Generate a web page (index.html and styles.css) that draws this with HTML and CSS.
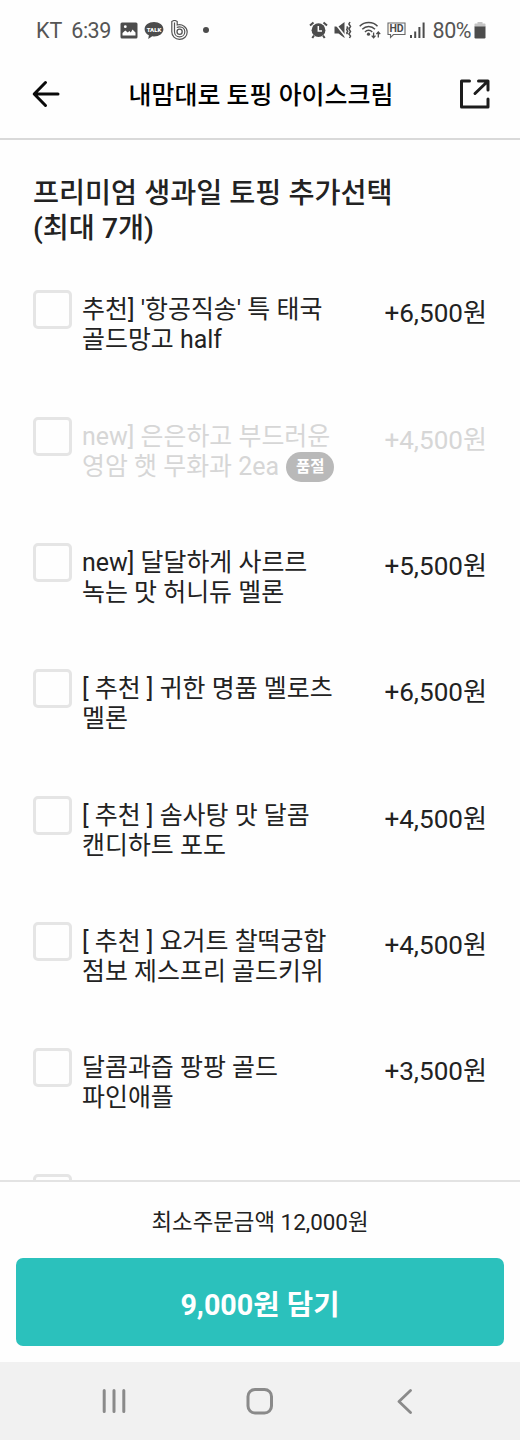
FILE: index.html
```
<!DOCTYPE html>
<html lang="ko">
<head>
    <meta charset="utf-8">
    <meta name="viewport" content="width=device-width, initial-scale=1">
    <title>내맘대로 토핑 아이스크림</title>
    <link rel="stylesheet" href="styles.css">
</head>
<body>
<div class="screen">
    <div class="status-bar">
        <div class="status-left">
            <span class="carrier">KT</span>
            <span class="time">6:39</span>
            <svg class="icon-picture" width="18" height="17" viewBox="0 0 18 17">
                <rect x="0.5" y="0.5" width="17" height="16" rx="1.5" fill="#4c4c4c"/>
                <path d="M2.500 13.500V11l2.800-2.500 2.500 2 1.500-1.500 1.500 1.500L12.500 7.500l3 3v3z" fill="#fff"/>
                <circle cx="5.300" cy="4.700" r="1.400" fill="#fff"/>
            </svg>
            <svg class="icon-talk" width="20" height="19" viewBox="0 0 20 19">
                <path d="M10 1C4.800 1 0.600 4.100 0.600 8.200c0 2.600 1.700 4.800 4.300 6.100L4.200 18l4-2.700 1.800.1c5.200 0 9.400-3.100 9.400-7.200S15.200 1 10 1z" fill="#4c4c4c"/>
                <text x="10" y="10.500" text-anchor="middle">TALK</text>
            </svg>
            <svg class="icon-band" width="17" height="20" viewBox="0 0 17 20" fill="none" stroke="#555">
                <path d="M0.800 1.500Q3.500-.5 6.200 1.500V5c5-1.200 10 2 10 7 0 4-3.200 7.400-7.700 7.400S0.800 16 0.800 11.800z" stroke-width="1.200"/>
                <path d="M3.500 2.500v9.300c0 2.900 2.200 5.100 5.100 5.100s5.200-2.200 5.200-5.100-2.300-5-5.200-5c-1 0-2 .2-2.800.8" stroke-width="1.200"/>
                <circle cx="8.600" cy="11.800" r="2.600" stroke-width="1.300"/>
            </svg>
            <span class="dot"></span>
        </div>
        <div class="status-right">
            <svg class="icon-alarm" width="19" height="18" viewBox="0 0 19 18">
                <circle cx="9.500" cy="9.200" r="6.900" fill="#4c4c4c"/>
                <path d="M1 4.500 4.500 1.500M18 4.500 14.500 1.500M5 14.500 3.300 17M14 14.500 15.700 17" stroke="#4c4c4c" stroke-width="2" fill="none"/>
                <path d="M9.300 5v5h3.700" stroke="#fff" stroke-width="1.500" fill="none"/>
            </svg>
            <svg class="icon-mute" width="18" height="18" viewBox="0 0 18 18">
                <path d="M0.500 5.500h4L10.500 1v16L4.500 12.500h-4z" fill="#4c4c4c"/>
                <path d="M0 1 11.500 15.500" stroke="#fff" stroke-width="1.600"/>
                <path d="M12.700 5.500l1 1.200-1 1.800 1 1.800-1 1.700.8 1.200M16 1l-1.100 2 1.600 2.500-1.600 2.500 1.600 2.500-1.600 2.500 1.600 2-1 2" fill="none" stroke="#4c4c4c" stroke-width="1.500"/>
            </svg>
            <svg class="icon-wifi" width="22" height="18" viewBox="0 0 22 18" fill="none" stroke="#4c4c4c">
                <path d="M0.700 5.200C5.500 0.300 14 0.300 18.500 5.200M3.300 8.200c3.600-3.700 9.200-3.700 12.700 0M6 11c2-2.200 5.200-2.200 7.200 0" stroke-width="1.500"/>
                <circle cx="9.500" cy="13.200" r="1.600" fill="#4c4c4c" stroke="none"/>
                <path d="M14.600 11.500v5M12.700 14.600l1.900 2.200 1.900-2.200M19.300 16.500v-5M17.400 13.200l1.900-2.200 1.900 2.200" stroke-width="1.300"/>
            </svg>
            <svg class="icon-hd" width="19" height="17" viewBox="0 0 19 17">
                <path d="M1 1h17v11.500H6.500L3.500 15.500V12.500H1z" fill="none" stroke="#666" stroke-width="1.100"/>
                <text x="9.500" y="10.400" text-anchor="middle">HD</text>
            </svg>
            <svg class="icon-signal" width="15" height="16" viewBox="0 0 15 16">
                <path d="M0 13h2v3H0zM4.200 9.500h2V16h-2zM8.400 5h2v11h-2zM12.600 0.500h2V16h-2z" fill="#4c4c4c"/>
            </svg>
            <span class="percent">80%</span>
            <svg class="icon-battery" width="12" height="18" viewBox="0 0 12 18">
                <path d="M3.500 1h5v1.500h2.300q.7 0 .7.700V6H.5V3.200q0-.7.700-.7h2.300z" fill="#c4c4c4"/>
                <path d="M.5 5.500h11v10.800q0 1.200-1.200 1.200H1.700q-1.200 0-1.200-1.200z" fill="#4c4c4c"/>
            </svg>
        </div>
    </div>

    <div class="header">
        <svg class="button-back" width="28" height="28" viewBox="0 0 28 28" fill="none" stroke="#0a0a0a" stroke-width="3" stroke-linecap="round" stroke-linejoin="round">
            <path d="M13.500 2.500 2.200 14l11.300 11.500M2.500 14h23.500"/>
        </svg>
        <h1 class="title">내맘대로 토핑 아이스크림</h1>
        <svg class="button-share" width="30" height="30" viewBox="0 0 30 30" fill="none" stroke="#1c1c1c" stroke-width="3" stroke-linejoin="round" stroke-linecap="round">
            <path d="M9.500 2H1.500v26H28V20M18.500 2H28v9M27.500 2.500 15 14.500"/>
        </svg>
    </div>

    <div class="content">
        <h2 class="group-title">프리미엄 생과일 토핑 추가선택<br>(최대 7개)</h2>

        <div class="option">
            <div class="checkbox"></div>
            <div class="option-name">추천] '항공직송' 특 태국<br>골드망고 half</div>
            <div class="option-price">+6,500원</div>
        </div>
        <div class="option sold-out">
            <div class="checkbox"></div>
            <div class="option-name">new] 은은하고 부드러운<br>영암 햇 무화과 2ea <span class="badge">품절</span></div>
            <div class="option-price">+4,500원</div>
        </div>
        <div class="option">
            <div class="checkbox"></div>
            <div class="option-name">new] 달달하게 사르르<br>녹는 맛 허니듀 멜론</div>
            <div class="option-price">+5,500원</div>
        </div>
        <div class="option">
            <div class="checkbox"></div>
            <div class="option-name">[ 추천 ] 귀한 명품 멜로츠<br>멜론</div>
            <div class="option-price">+6,500원</div>
        </div>
        <div class="option">
            <div class="checkbox"></div>
            <div class="option-name">[ 추천 ] 솜사탕 맛 달콤<br>캔디하트 포도</div>
            <div class="option-price">+4,500원</div>
        </div>
        <div class="option">
            <div class="checkbox"></div>
            <div class="option-name">[ 추천 ] 요거트 찰떡궁합<br>점보 제스프리 골드키위</div>
            <div class="option-price">+4,500원</div>
        </div>
        <div class="option">
            <div class="checkbox"></div>
            <div class="option-name">달콤과즙 팡팡 골드<br>파인애플</div>
            <div class="option-price">+3,500원</div>
        </div>
        <div class="option">
            <div class="checkbox"></div>
        </div>
    </div>

    <div class="footer">
        <div class="min-order">최소주문금액 12,000원</div>
        <button class="order-button">9,000원 담기</button>
    </div>

    <div class="nav-bar">
        <svg width="26" height="26" viewBox="0 0 26 26" fill="none" stroke="#8a8a8a" stroke-width="3" stroke-linecap="round">
            <path d="M3.200 2.500v21M13 2.500v21M22.800 2.500v21"/>
        </svg>
        <svg width="28" height="28" viewBox="0 0 28 28" fill="none" stroke="#8a8a8a" stroke-width="3">
            <rect x="2" y="2.500" width="23.500" height="23.500" rx="7"/>
        </svg>
        <svg width="26" height="26" viewBox="0 0 26 26" fill="none" stroke="#8a8a8a" stroke-width="2.800" stroke-linecap="round" stroke-linejoin="round">
            <path d="M18.500 2.500 7 13.500l11.500 11"/>
        </svg>
    </div>
</div>
</body>
</html>
```

FILE: styles.css
```
html, body {margin: 0; height: 100%; overflow: hidden;}
body{
    background: #fefefe;
    color: #222;
    font-family: Roboto, "Noto Sans CJK KR", sans-serif;
}
.screen{
    display: flex;
    flex-direction: column;
    height: 1440px;
}

/* Status bar */
.status-bar{
    display: flex;
    justify-content: space-between;
    box-sizing: border-box;
    height: 60px;
    padding: 0 34px 0 36px;
    color: #555;
    font-size: 21.500px;
}
.status-left, .status-right{
    display: flex;
    align-items: center;
    height: 60px;
}
.time{
    margin-left: 9px;
    letter-spacing: -0.500px;
}
.icon-picture{
    margin-left: 9px;
}
.icon-talk{
    margin-left: 6px;
}
.icon-talk text{
    font-size: 6px;
    font-weight: 900;
    fill: #fff;
}
.icon-band{
    margin-left: 7px;
}
.dot{
    width: 6px;
    height: 6px;
    margin-left: 15px;
    border-radius: 50%;
    background: #4c4c4c;
}
.icon-mute{
    margin-left: 6px;
}
.icon-wifi{
    margin-left: 7px;
}
.icon-hd{
    margin-left: 6px;
}
.icon-hd text{
    font-size: 10.500px;
    font-weight: bold;
    fill: #4c4c4c;
}
.icon-signal{
    margin-left: 4px;
}
.percent{
    margin-left: 8px;
    letter-spacing: -0.500px;
}
.icon-battery{
    margin-left: 3px;
}

/* Header */
.header{
    display: flex;
    align-items: center;
    justify-content: space-between;
    box-sizing: border-box;
    height: 80px;
    padding: 0 30px 10px 32px;
    border-bottom: 2px solid #d9d9d9;
}
.title{
    margin: 4px 0 0 2px;
    color: #000;
    font-size: 24.950px;
    font-weight: 500;
    line-height: 36px;
}

/* Options */
.content{
    flex: 1;
    min-height: 0;
    overflow: hidden;
    padding: 36px 33px 0;
}
.group-title{
    margin: 0 0 44.400px;
    font-size: 28.300px;
    font-weight: 500;
    line-height: 35px;
}
.option{
    display: flex;
    align-items: flex-start;
    height: 126.300px;
}
.checkbox{
    flex: none;
    box-sizing: border-box;
    width: 39px;
    height: 39px;
    border: 3px solid #e5e5e5;
    border-radius: 5px;
}
.option-name{
    flex: 1;
    margin: 5px 0 0 10px;
    font-size: 24.950px;
    line-height: 30px;
    white-space: nowrap;
}
.option-price{
    margin-top: 6px;
    font-size: 26.100px;
    line-height: 34px;
}
.sold-out{
    color: #d6d6d6;
}
.badge{
    display: inline-block;
    width: 48px;
    height: 30px;
    margin-left: 1px;
    border-radius: 15px;
    background: #b9b9b9;
    color: #fff;
    font-size: 15.500px;
    font-weight: bold;
    line-height: 31px;
    text-align: center;
    vertical-align: top;
}

/* Footer */
.footer{
    box-sizing: border-box;
    height: 182px;
    padding: 23px 16px 16px;
    border-top: 2px solid #e3e3e3;
}
.min-order{
    height: 53px;
    font-size: 22.400px;
    line-height: 34px;
    text-align: center;
}
.order-button{
    display: block;
    width: 100%;
    height: 88px;
    padding: 0;
    border: none;
    border-radius: 7px;
    background: #2bc1bc;
    color: #fff;
    font-family: inherit;
    font-size: 28.700px;
    font-weight: bold;
}

.nav-bar{
    display: flex;
    align-items: center;
    justify-content: space-between;
    box-sizing: border-box;
    height: 78px;
    padding: 0 102px 0 101px;
    background: #f1f1f1;
}
```
